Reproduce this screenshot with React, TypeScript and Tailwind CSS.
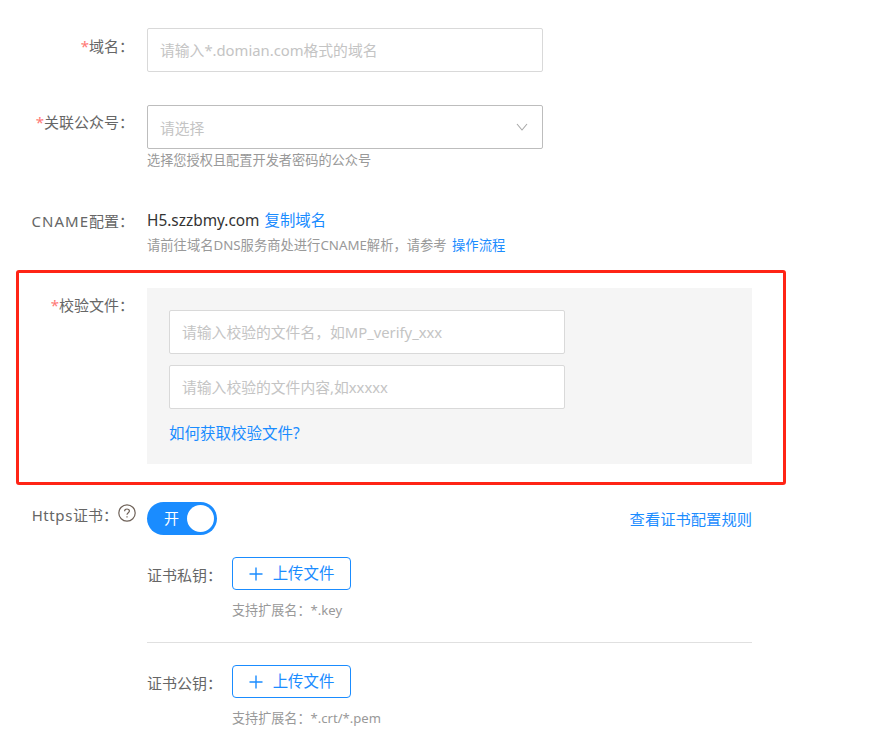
import React from "react";

const font = { fontFamily: '"Noto Sans", "Noto Sans CJK SC", sans-serif' };

function Label({ star, children }: { star?: boolean; children: React.ReactNode }) {
  return (
    <div className="w-[147px] shrink-0 pr-[13px] text-right text-[15px] leading-[20px] text-[#666]">
      {star && <span className="text-[#ff7875]">*</span>}
      {children}
    </div>
  );
}

function Field({ text, children, dark }: { text: string; children?: React.ReactNode; dark?: boolean }) {
  return (
    <div className={`flex h-[44px] w-[396px] items-center justify-between rounded-[2px] border bg-white pl-[12px] pr-[14px] text-[14.8px] text-[#c4c4c4] ${dark ? "border-[#bdbdbd]" : "border-[#d9d9d9]"}`}>
      <span className={dark ? "pt-[2px]" : ""}>{text}</span>
      {children}
    </div>
  );
}

function Upload() {
  return (
    <div className="flex h-[33px] w-[119px] items-center justify-center gap-[10px] rounded-[4px] border border-[#1a8cff] bg-white text-[15.4px] text-[#1a8cff]">
      <svg width="14" height="14" viewBox="0 0 14 14" fill="none" stroke="#1a8cff" strokeWidth="1.4">
        <path d="M7 0.5V13.5M0.5 7H13.5" />
      </svg>
      <span>上传文件</span>
    </div>
  );
}

export default function App() {
  return (
    <div className="h-[731px] w-[873px] overflow-hidden bg-white pt-[28px]" style={font}>
      <div className="flex">
        <div className="pt-[8px]"><Label star>域名：</Label></div>
        <Field text="请输入*.domian.com格式的域名" />
      </div>

      <div className="mt-[33px] flex">
        <div className="pt-[7px]"><Label star>关联公众号：</Label></div>
        <div>
          <Field text="请选择" dark>
            <svg width="12" height="8" viewBox="0 0 12 8" fill="none" stroke="#a8a8a8" strokeWidth="1.1">
              <path d="M1 1L6 7L11 1" />
            </svg>
          </Field>
          <div className="mt-[2px] text-[13.2px] leading-[18px] text-[#999]">选择您授权且配置开发者密码的公众号</div>
        </div>
      </div>

      <div className="mt-[42px] flex">
        <Label><span className="tracking-[1px]">CNAME</span>配置：</Label>
        <div>
          <div className="text-[15.4px] leading-[20px] text-[#333]">
            H5.szzbmy.com <span className="ml-[1px] text-[#1a8cff]">复制域名</span>
          </div>
          <div className="mt-[5px] text-[13.3px] leading-[18px] text-[#999]">
            请前往域名DNS服务商处进行CNAME解析，请参考 <span className="ml-[2px] text-[#1a8cff]">操作流程</span>
          </div>
        </div>
      </div>

      <div className="ml-[16px] mt-[16px] flex h-[215px] w-[770px] rounded-[3px] border-[3px] border-[#ff2416] pt-[15px]">
        <div className="-ml-[19px] pt-[7px]"><Label star>校验文件：</Label></div>
        <div className="flex h-[176px] w-[605px] flex-col gap-[11px] bg-[#f5f5f5] pl-[22px] pt-[22px]">
          <Field text="请输入校验的文件名，如MP_verify_xxx" />
          <Field text="请输入校验的文件内容,如xxxxx" />
          <div className="mt-[1px] text-[15.5px] leading-[24px] text-[#1a8cff]">如何获取校验文件?</div>
        </div>
      </div>

      <div className="mt-[17px] flex">
        <div className="flex w-[147px] shrink-0 justify-end pr-[11px] pt-[2px]">
          <span className="mt-[1px] text-[15px] leading-[20px] text-[#666]"><span className="tracking-[0.6px]">Https</span>证书：</span>
          <svg width="18" height="18" viewBox="0 0 18 18" fill="none" stroke="#6f6259" strokeWidth="1.2">
            <circle cx="9" cy="9" r="8.2" />
            <path d="M6.6 7.2C6.6 5.8 7.7 5 9 5C10.4 5 11.4 5.9 11.4 7.1C11.4 8.6 9 8.9 9 10.8" />
            <path d="M9 12.2V13.4" />
          </svg>
        </div>
        <div className="w-[605px]">
          <div className="flex items-center justify-between">
            <div className="flex h-[33px] w-[70px] items-center justify-between rounded-full bg-[#1a8cff] pl-[17px] pr-[3px] text-[15px] text-white">
              <span>开</span>
              <span className="h-[27px] w-[27px] rounded-full bg-white" />
            </div>
            <span className="pt-[2px] text-[15.3px] text-[#1a8cff]">查看证书配置规则</span>
          </div>
          <div className="mt-[22px] flex items-center">
            <span className="w-[85px] pt-[4px] text-[15px] text-[#666]">证书私钥：</span>
            <Upload />
          </div>
          <div className="ml-[85px] mt-[11px] text-[13.1px] leading-[18px] text-[#999]">支持扩展名：*.key</div>
          <div className="mt-[23px] h-px bg-[#e0e0e0]" />
          <div className="mt-[22px] flex items-center">
            <span className="w-[85px] pt-[4px] text-[15px] text-[#666]">证书公钥：</span>
            <Upload />
          </div>
          <div className="ml-[85px] mt-[11px] text-[13.1px] leading-[18px] text-[#999]">支持扩展名：*.crt/*.pem</div>
        </div>
      </div>
    </div>
  );
}
